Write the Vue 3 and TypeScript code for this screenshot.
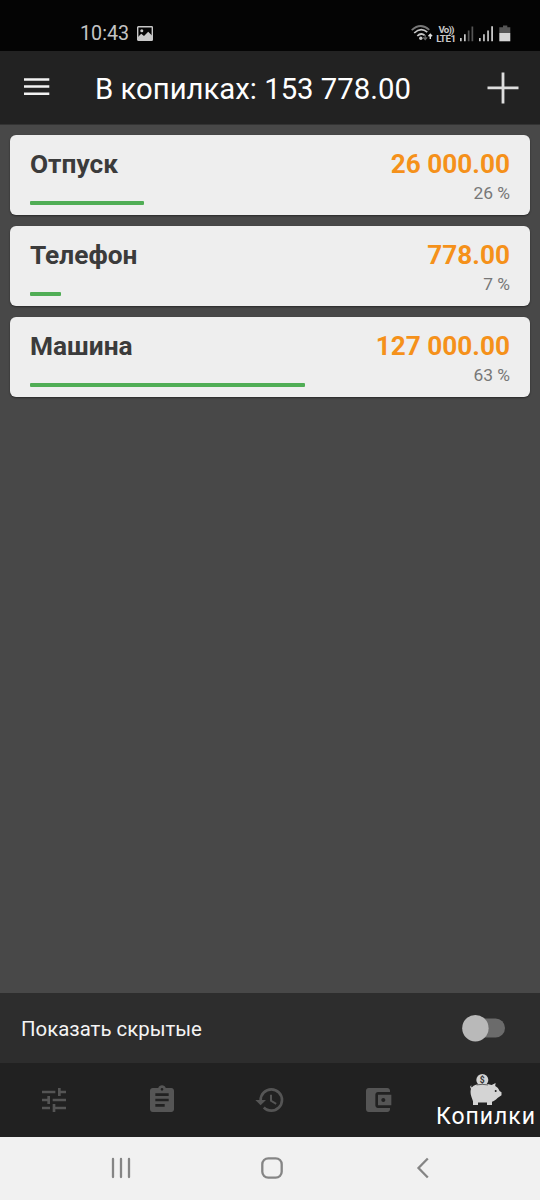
<script setup lang="ts">
interface Bank {
  name: string
  amount: string
  percent: number
  barWidth: number
}

const banks: Bank[] = [
  { name: 'Отпуск', amount: '26 000.00', percent: 26, barWidth: 114 },
  { name: 'Телефон', amount: '778.00', percent: 7, barWidth: 31.5 },
  { name: 'Машина', amount: '127 000.00', percent: 63, barWidth: 275 },
]

const tabIcons: string[] = [
  'M3 17v2h6v-2H3zM3 5v2h10V5H3zm10 16v-2h8v-2h-8v-2h-2v6h2zM7 9v2H3v2h4v2h2V9H7zm14 4v-2H11v2h10zm-6-4h2V7h4V5h-4V3h-2v6z',
  'M19 3h-4.18C14.4 1.84 13.3 1 12 1c-1.3 0-2.4.84-2.82 2H5c-1.1 0-2 .9-2 2v14c0 1.1.9 2 2 2h14c1.1 0 2-.9 2-2V5c0-1.1-.9-2-2-2zm-7 0c.55 0 1 .45 1 1s-.45 1-1 1-1-.45-1-1 .45-1 1-1zm2 14H7v-2h7v2zm3-4H7v-2h10v2zm0-4H7V7h10v2z',
  'M13.5 8H12v5l4.28 2.54.72-1.21-3.5-2.08V8M13 3a9 9 0 0 0-9 9H1l3.96 4.03L9 12H6a7 7 0 1 1 7 7c-1.93 0-3.68-.79-4.94-2.06l-1.42 1.42A8.9 8.9 0 0 0 13 21a9 9 0 0 0 0-18',
  'M21 18v1c0 1.1-.9 2-2 2H5c-1.11 0-2-.9-2-2V5c0-1.1.89-2 2-2h14c1.1 0 2 .9 2 2v1h-9c-1.11 0-2 .9-2 2v8c0 1.1.89 2 2 2h9zm-9-2h10V8H12v8zm4-2.5c-.83 0-1.5-.67-1.5-1.5s.67-1.5 1.5-1.5 1.5.67 1.5 1.5-.67 1.5-1.5 1.5z',
]
</script>

<template>
  <div class="screen">
    <div class="status">
      <span class="time">10:43</span>
      <svg class="picture" width="16" height="15" viewBox="0 0 16 15">
        <rect x=".7" y=".7" width="14.6" height="13.6" rx=".6" fill="none" stroke="#c8c8c8" stroke-width="1.4" />
        <path d="M1 11l3.2-3.2L7 10l4.2-4.2L15 9.5V14H1z" fill="#c8c8c8" />
        <circle cx="4.8" cy="4.7" r="1.5" fill="#c8c8c8" />
      </svg>
      <svg class="signals" width="102" height="20" viewBox="0 0 102 20">
        <g fill="none" stroke="#c8c8c8" stroke-width="1.7">
          <path d="M-.3 6.2Q8.500-2 17.300 5.800" stroke="#777" />
          <path d="M2.200 9Q8.700 2.600 15.300 8.200" />
          <path d="M5.300 12Q9 8.300 12.700 11.400" />
        </g>
        <circle cx="8.800" cy="14.300" r="1.700" fill="#c8c8c8" />
        <path d="M13.200 11v4M11.200 13.400l2 2.100 2-2.100" fill="none" stroke="#666" stroke-width="1.300" />
        <path d="M18.300 15v-4.500M16.500 12.200l1.800-2 1.800 2" fill="none" stroke="#ddd" stroke-width="1.400" />
        <text x="26.500" y="8.800" class="lte" textLength="16">Vo))</text>
        <text x="24.200" y="17.600" class="lte" textLength="19.800">LTE1</text>
        <g fill="#c8c8c8">
          <path d="M48 14h1.700v3.300H48zM52 10.300h1.700v7H52z" />
          <path d="M55.800 6.500h1.700v10.800h-1.700zM59.500 2.500h1.700v14.800h-1.700z" fill="#555" />
          <path d="M67 14h1.700v3.300H67zM71.100 10.300h1.700v7h-1.700zM75.200 6.500h1.700v10.800h-1.700zM79.200 2.300H81v15h-1.800z" />
          <path d="M87.300 3.200H91V1.500h4.300v1.700h3V9h-11z" fill="#555" />
          <path d="M87.300 9h11v8.300h-11z" fill="#d5d5d5" />
        </g>
      </svg>
    </div>

    <header class="appbar">
      <svg class="menu" width="26" height="18" viewBox="0 0 26 18">
        <path d="M0 1.400h25.300M0 8.600h25.300M0 15.800h25.300" stroke="#f2f2f2" stroke-width="2.500" />
      </svg>
      <h1 class="title">В копилках: 153 778.00</h1>
      <svg class="plus" width="32" height="32" viewBox="0 0 32 32">
        <path d="M.500 15.800h31M16 .500v31" stroke="#dedede" stroke-width="2.800" />
      </svg>
    </header>

    <main class="list">
      <article v-for="bank in banks" :key="bank.name" class="card">
        <div class="row">
          <span class="name">{{ bank.name }}</span>
          <span class="amount">{{ bank.amount }}</span>
        </div>
        <div class="percent">{{ bank.percent }} %</div>
        <div class="bar" :style="{ width: bank.barWidth + 'px' }"></div>
      </article>
    </main>

    <div class="hidden-row">
      <span class="hidden-label">Показать скрытые</span>
      <svg class="switch" width="44" height="28" viewBox="0 0 44 28">
        <rect x="5" y="4.500" width="38" height="19" rx="9.500" fill="#6b6b6b" />
        <circle cx="13.400" cy="14.200" r="13.200" fill="#b9b9b9" />
      </svg>
    </div>

    <nav class="tabs">
      <div v-for="icon in tabIcons" :key="icon" class="tab">
        <svg width="32" height="32" viewBox="0 0 24 24"><path :d="icon" fill="#555" /></svg>
      </div>
      <div class="tab active">
        <svg class="pig" width="33" height="32" viewBox="0 0 33 32">
          <path
            d="M1 11.500C-.2 12.500.2 14 1 14.700C.3 17 .3 20 1.400 22.800L3 27.300V31H8V28.500H17V31H22V27.800C24.500 26.800 26.500 25.500 27.500 24L31.500 21.200V18.200L29.500 17C28.800 14.800 27.300 13 25.200 12L25.600 9L21.700 11C19 10 16 9.700 12.500 9.700C7.500 9.700 3.600 11 2 13.300C1.200 13.400 .9 12.600 1.500 11.800Z"
            fill="#d4d4d4"
          />
          <circle cx="12.300" cy="6" r="6" fill="#d4d4d4" />
          <path d="M6.600 10.900Q12 9.800 18 10.900" fill="none" stroke="#444" stroke-width=".8" />
          <text x="12.300" y="8.800" text-anchor="middle" class="coin">$</text>
          <circle cx="25.700" cy="17" r="1" fill="#222" />
        </svg>
        <span class="tab-label">Копилки</span>
      </div>
    </nav>

    <div class="system">
      <svg class="sys" width="22" height="22" viewBox="0 0 22 22">
        <path d="M3 2v18M11 2v18M19 2v18" stroke-linecap="round" />
      </svg>
      <svg class="sys home" width="24" height="24" viewBox="0 0 24 24">
        <rect x="2.300" y="2.300" width="19.400" height="19.400" rx="6" />
      </svg>
      <svg class="sys" width="14" height="22" viewBox="0 0 14 22">
        <path d="M11.800 1.500L2.500 11l9.300 9.500" />
      </svg>
    </div>
  </div>
</template>

<style>
body {
  margin: 0;
  background: #484848;
}
</style>

<style scoped>
.screen {
  display: flex;
  flex-direction: column;
  width: 540px;
  height: 1200px;
  overflow: hidden;
  background: #484848;
  font-family: Roboto, "Liberation Sans", sans-serif;
}
.status {
  display: flex;
  flex: none;
  box-sizing: border-box;
  height: 51px;
  padding: 22px 26px 0 80px;
  background: #040404;
}
.time {
  font-size: 19.7px;
  line-height: 24px;
  color: #c4c4c4;
}
.picture {
  margin: 4px 0 0 8px;
}
.signals {
  margin: 2px 0 0 auto;
  overflow: visible;
}
.lte {
  font-size: 9.8px;
  font-weight: 700;
  fill: #c8c8c8;
}
.appbar {
  display: flex;
  flex: none;
  box-sizing: border-box;
  height: 74px;
  padding-left: 24px;
  background: #222;
  border-bottom: 1px solid #333;
}
.menu {
  margin-top: 27px;
}
.title {
  margin: 21px 0 0 45px;
  font-size: 29.3px;
  font-weight: 400;
  line-height: 34px;
  color: #fff;
  white-space: nowrap;
}
.plus {
  margin: 21px 21px 0 auto;
}
.list {
  display: flex;
  flex: 1;
  flex-direction: column;
  gap: 10.8px;
  padding: 10px 10.3px 0;
}
.card {
  box-sizing: border-box;
  height: 80px;
  padding: 14px 19.7px 0;
  background: #eee;
  border-radius: 6px;
  box-shadow: 0 1px 2px rgba(0, 0, 0, 0.45);
}
.row {
  display: flex;
  justify-content: space-between;
  font-size: 26.3px;
  font-weight: 700;
  line-height: 30px;
}
.name {
  color: #3b3b3b;
}
.amount {
  font-size: 26.2px;
  color: #f5911a;
}
.percent {
  margin-top: 4px;
  font-size: 17.4px;
  line-height: 20px;
  text-align: right;
  color: #777;
}
.bar {
  height: 4px;
  margin-top: -2px;
  background: #50ad55;
  border-radius: 1px;
}
.hidden-row {
  display: flex;
  flex: none;
  align-items: center;
  justify-content: space-between;
  height: 70px;
  padding: 0 34px 0 21px;
  background: #2d2d2d;
}
.hidden-label {
  padding-top: 2px;
  font-size: 20.4px;
  line-height: 24px;
  color: #f4f4f4;
}
.tabs {
  display: grid;
  flex: none;
  grid-template-columns: repeat(5, 108px);
  height: 74px;
  background: #212121;
}
.tab {
  display: flex;
  flex-direction: column;
  align-items: center;
  padding-top: 21px;
}
.tab.active {
  padding-top: 11px;
}
.tab-label {
  margin-top: -3px;
  font-size: 23px;
  line-height: 27px;
  letter-spacing: 1px;
  color: #fff;
}
.coin {
  font-size: 8.5px;
  font-weight: 700;
  fill: #333;
}
.system {
  display: flex;
  flex: none;
  align-items: center;
  justify-content: space-between;
  box-sizing: border-box;
  height: 63px;
  padding: 0 110px 2px;
  background: #f1f1f1;
}
.sys {
  fill: none;
  stroke: #858585;
  stroke-width: 2.3;
}
.home {
  margin-right: 4px;
}
</style>
